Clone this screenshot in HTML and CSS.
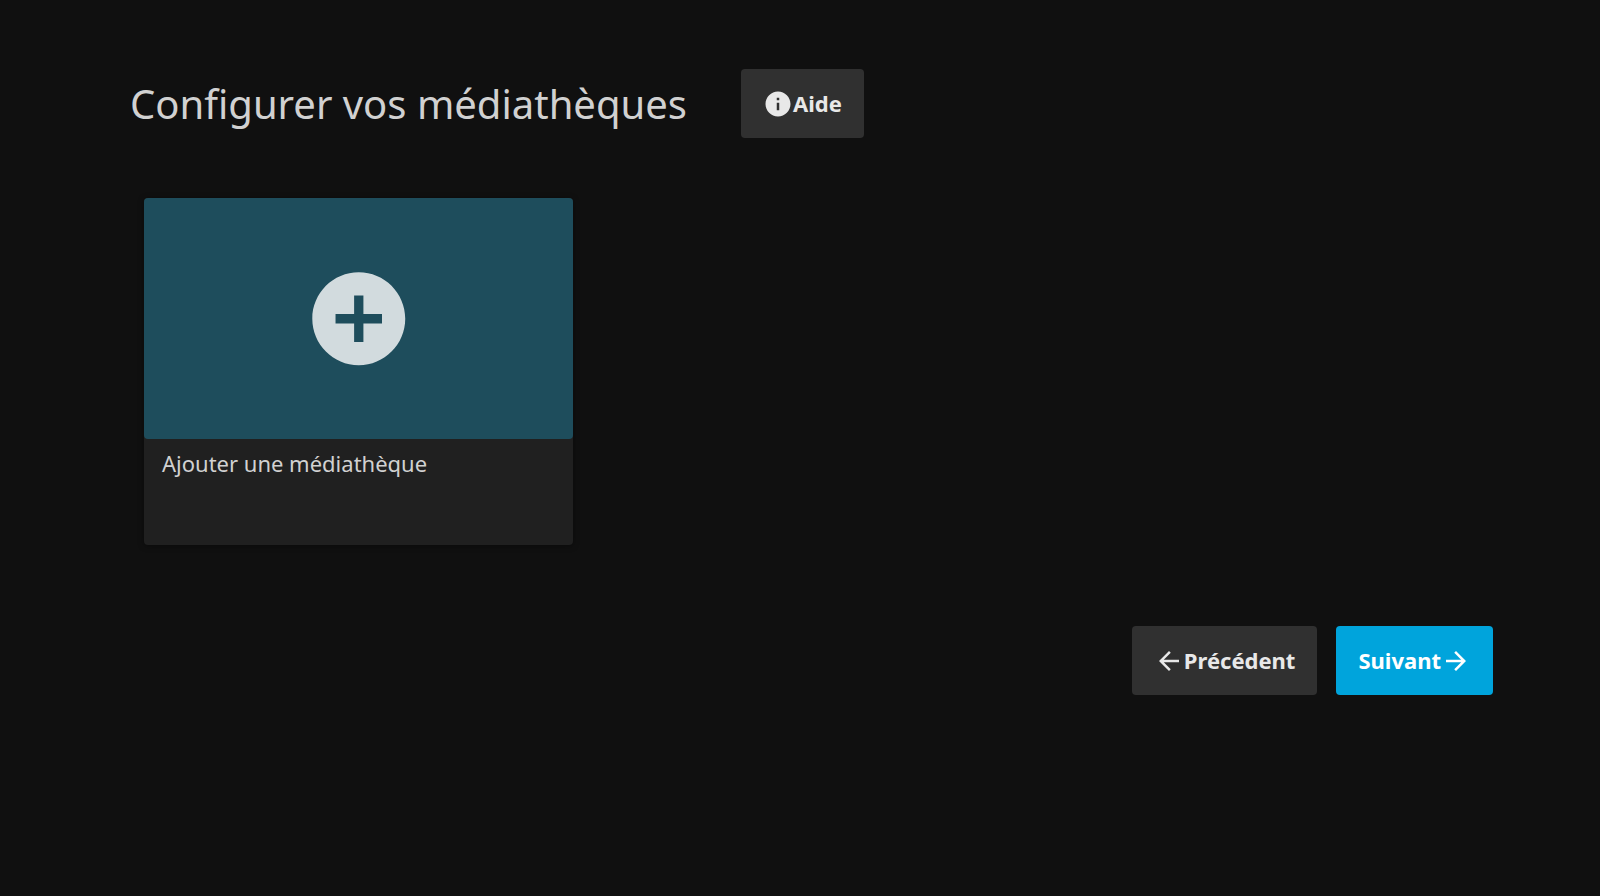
FILE: index.html
```html
<!DOCTYPE html>
<html lang="fr">
<head>
  <meta charset="UTF-8">
  <meta name="viewport" content="width=device-width, initial-scale=1.0">
  <title>Configurer vos médiathèques</title>
  <link rel="stylesheet" href="styles.css">
</head>
<body>
  <main class="wizard">
    <header class="wizard-header">
      <h1>Configurer vos médiathèques</h1>
      <a class="button" href="#aide">
        <svg class="icon" viewBox="0 0 24 24" aria-hidden="true"><path d="M12 2C6.48 2 2 6.48 2 12s4.48 10 10 10 10-4.48 10-10S17.52 2 12 2zm1 15h-2v-6h2v6zm0-8h-2V7h2v2z"/></svg>
        <span>Aide</span>
      </a>
    </header>

    <div class="libraries">
      <button type="button" class="card">
        <span class="card-image">
          <svg viewBox="0 0 24 24" aria-hidden="true"><path d="M12 2C6.48 2 2 6.48 2 12s4.48 10 10 10 10-4.48 10-10S17.52 2 12 2zm5 11h-4v4h-2v-4H7v-2h4V7h2v4h4v2z"/></svg>
        </span>
        <span class="card-text">Ajouter une médiathèque</span>
      </button>
    </div>

    <nav class="wizard-nav">
      <button type="button" class="button">
        <svg class="icon" viewBox="0 0 24 24" aria-hidden="true"><path d="M20 11H7.83l5.59-5.59L12 4l-8 8 8 8 1.41-1.41L7.83 13H20v-2z"/></svg>
        <span>Précédent</span>
      </button>
      <button type="button" class="button button-submit">
        <span>Suivant</span>
        <svg class="icon" viewBox="0 0 24 24" aria-hidden="true"><path d="M12 4l-1.41 1.41L16.17 11H4v2h12.17l-5.58 5.59L12 20l8-8z"/></svg>
      </button>
    </nav>
  </main>
</body>
</html>
```
FILE: styles.css
```css
* {
  margin: 0;
  padding: 0;
  box-sizing: border-box;
}

body {
  background: #101010;
  color: #d1d1d1;
  font-family: 'Noto Sans', sans-serif;
  font-size: 22px;
}

.wizard {
  padding: 69px 107px 69px 130px;
}

.wizard-header {
  display: flex;
  flex-wrap: wrap;
  align-items: center;
  gap: 54px;
  margin-bottom: 60px;
}

h1 {
  font-size: 40px;
  font-weight: 400;
  line-height: 56px;
}

.button {
  display: inline-flex;
  align-items: center;
  padding: 19px 22px;
  border: 0;
  border-radius: 4px;
  background: #303030;
  color: #e8e8e8;
  font: inherit;
  font-weight: 700;
  line-height: 31px;
  text-decoration: none;
  cursor: pointer;
}

.button-submit {
  background: #00a4dc;
  color: #fff;
}

.icon {
  width: 30px;
  height: 30px;
  fill: currentColor;
}

.libraries {
  display: grid;
  grid-template-columns: repeat(3, 1fr);
  gap: 26px;
  padding: 0 10px 0 14px;
  margin-bottom: 81px;
}

.card {
  border: 0;
  border-radius: 4px;
  background: #202020;
  box-shadow: 0 1px 6px rgba(0, 0, 0, 0.4);
  color: inherit;
  font: inherit;
  text-align: left;
  cursor: pointer;
}

.card-image {
  display: flex;
  align-items: center;
  justify-content: center;
  aspect-ratio: 16 / 9;
  border-radius: 4px;
  background: #1e4d5c;
}

.card-image svg {
  width: 26%;
  fill: #d2dbde;
}

.card-text {
  display: block;
  min-height: 106px;
  padding: 8px 18px;
  line-height: 32px;
}

.wizard-nav {
  display: flex;
  justify-content: flex-end;
  gap: 19px;
}

@media (max-width: 900px) {
  .wizard {
    padding: 32px 24px;
  }

  .libraries {
    grid-template-columns: 1fr;
  }
}
```
